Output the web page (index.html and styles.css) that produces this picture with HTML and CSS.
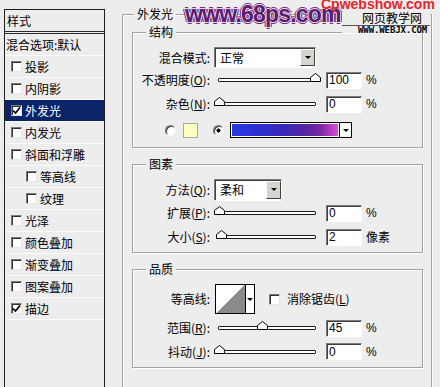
FILE: index.html
```html
<!DOCTYPE html>
<html lang="zh-CN">
<head>
<meta charset="utf-8">
<title>图层样式 - 外发光</title>
<link rel="stylesheet" href="styles.css">
</head>
<body>
<div class="dialog">

  <div class="styles">
    <div class="styles-head">样式</div>
    <div class="item plain">混合选项:默认</div>
    <div class="item"><span class="chk"></span>投影</div>
    <div class="item"><span class="chk"></span>内阴影</div>
    <div class="item selected"><span class="chk on"><svg width="9" height="9" viewBox="0 0 9 9"><polyline points="1,4.5 3.5,7 8,1.5" fill="none" stroke="#000" stroke-width="1.7"/></svg></span>外发光</div>
    <div class="item"><span class="chk"></span>内发光</div>
    <div class="item"><span class="chk"></span>斜面和浮雕</div>
    <div class="item sub"><span class="chk"></span>等高线</div>
    <div class="item sub"><span class="chk"></span>纹理</div>
    <div class="item"><span class="chk"></span>光泽</div>
    <div class="item"><span class="chk"></span>颜色叠加</div>
    <div class="item"><span class="chk"></span>渐变叠加</div>
    <div class="item"><span class="chk"></span>图案叠加</div>
    <div class="item"><span class="chk on"><svg width="9" height="9" viewBox="0 0 9 9"><polyline points="1,4.5 3.5,7 8,1.5" fill="none" stroke="#000" stroke-width="1.7"/></svg></span>描边</div>
  </div>

  <div class="main">
    <fieldset class="outer">
      <legend>外发光</legend>

      <fieldset class="group g-struct">
        <legend>结构</legend>
        <div class="row h21">
          <span class="lbl">混合模式:</span>
          <div class="select w-mode"><span class="val">正常</span><span class="drop"><i class="arrow"></i></span></div>
        </div>
        <div class="row h24">
          <span class="lbl">不透明度(<u>O</u>):</span>
          <div class="slider"><span class="thumb" style="left: 100%"><svg width="11" height="9" viewBox="0 0 11 9"><path d="M0.5 8.5V4.5L5.5 0.5L10.5 4.5V8.5Z" fill="#fff" stroke="#000"/></svg></span></div>
          <input class="num" value="100" readonly>
          <span class="unit">%</span>
        </div>
        <div class="row h24">
          <span class="lbl">杂色(<u>N</u>):</span>
          <div class="slider"><span class="thumb" style="left: 0%"><svg width="11" height="9" viewBox="0 0 11 9"><path d="M0.5 8.5V4.5L5.5 0.5L10.5 4.5V8.5Z" fill="#fff" stroke="#000"/></svg></span></div>
          <input class="num" value="0" readonly>
          <span class="unit">%</span>
        </div>
        <div class="row h28 colors">
          <span class="radio"></span>
          <span class="swatch"></span>
          <span class="radio on"></span>
          <div class="grad"><span class="grad-bar"></span><span class="grad-drop"><i class="arrow"></i></span></div>
        </div>
      </fieldset>

      <fieldset class="group g-elem">
        <legend>图素</legend>
        <div class="row h23">
          <span class="lbl">方法(<u>Q</u>):</span>
          <div class="select w-method"><span class="val">柔和</span><span class="drop"><i class="arrow"></i></span></div>
        </div>
        <div class="row h24">
          <span class="lbl">扩展(<u>P</u>):</span>
          <div class="slider"><span class="thumb" style="left: 0%"><svg width="11" height="9" viewBox="0 0 11 9"><path d="M0.5 8.5V4.5L5.5 0.5L10.5 4.5V8.5Z" fill="#fff" stroke="#000"/></svg></span></div>
          <input class="num" value="0" readonly>
          <span class="unit">%</span>
        </div>
        <div class="row h24">
          <span class="lbl">大小(<u>S</u>):</span>
          <div class="slider"><span class="thumb" style="left: 2%"><svg width="11" height="9" viewBox="0 0 11 9"><path d="M0.5 8.5V4.5L5.5 0.5L10.5 4.5V8.5Z" fill="#fff" stroke="#000"/></svg></span></div>
          <input class="num" value="2" readonly>
          <span class="unit cjk">像素</span>
        </div>
      </fieldset>

      <fieldset class="group g-quality">
        <legend>品质</legend>
        <div class="row h34">
          <span class="lbl">等高线:</span>
          <div class="contour"><span class="contour-pre"></span><span class="contour-drop"><i class="arrow"></i></span></div>
          <span class="chk aa"></span>
          <span class="chk-lbl">消除锯齿(<u>L</u>)</span>
        </div>
        <div class="row h24">
          <span class="lbl">范围(<u>R</u>):</span>
          <div class="slider"><span class="thumb" style="left: 45%"><svg width="11" height="9" viewBox="0 0 11 9"><path d="M0.5 8.5V4.5L5.5 0.5L10.5 4.5V8.5Z" fill="#fff" stroke="#000"/></svg></span></div>
          <input class="num" value="45" readonly>
          <span class="unit">%</span>
        </div>
        <div class="row h23">
          <span class="lbl">抖动(<u>J</u>):</span>
          <div class="slider"><span class="thumb" style="left: 0%"><svg width="11" height="9" viewBox="0 0 11 9"><path d="M0.5 8.5V4.5L5.5 0.5L10.5 4.5V8.5Z" fill="#fff" stroke="#000"/></svg></span></div>
          <input class="num" value="0" readonly>
          <span class="unit">%</span>
        </div>
      </fieldset>
    </fieldset>
  </div>

  <div class="wm-68">www.68ps.com</div>
  <div class="wm-jx">
    <div class="jx-cn">网页教学网</div>
    <div class="jx-en">WWW.WEBJX.COM</div>
  </div>
  <div class="wm-cp">Cpwebshow.com</div>
</div>
</body>
</html>
```

FILE: styles.css
```css
body {
    margin: 0;
    background: #ededed;
    color: #000;
    font: 12px/14px "Noto Sans CJK SC", "Liberation Sans", sans-serif;
    overflow: hidden;
}

.dialog {
    position: relative;
    display: flex;
    height: 387px;
    overflow: hidden;
}

/* left list of styles */
.styles {
    flex: none;
    width: 99px;
    height: 420px;
    margin: 9px 0 0 4px;
    border: 1px solid #1e1e1e;
    border-bottom: 0;
}

.styles-head {
    height: 21px;
    line-height: 21px;
    padding-left: 2px;
    border-bottom: 3px double #2a2a2a;
}

.item {
    display: flex;
    align-items: center;
    height: 21px;
    padding-left: 6px;
    border-bottom: 1px solid #fbfbfb;
}

.item.plain { padding-left: 1px; }
.item.sub { padding-left: 21px; }

.item.selected {
    background: #0a246a;
    color: #fff;
}

.chk {
    flex: none;
    display: flex;
    align-items: center;
    justify-content: center;
    width: 9px;
    height: 9px;
    margin-right: 3px;
    background: #fff;
    border: 1px solid;
    border-color: #7a7a7a #e6e6e6 #e6e6e6 #7a7a7a;
    box-shadow: inset 1px 1px 0 #333;
}

/* right side */
.main {
    flex: none;
    margin-left: 17px;
    padding-top: 7px;
}

fieldset {
    box-sizing: border-box;
    min-width: 0;
    margin: 0;
    padding: 0;
    border: 1px solid #a2a2a2;
    box-shadow: 1px 1px 0 #fff, inset 1px 1px 0 #fff;
}

legend {
    padding: 0 3px;
    line-height: 14px;
    background: #ededed;
}

.outer {
    width: 310px;
    height: 420px;
}

.outer > legend { margin-left: 11px; }

.group {
    width: 291px;
    margin-left: 9px;
}

.group > legend { margin-left: 13px; }

.g-struct { margin-top: 4px; padding: 8px 0 3px; }
.g-elem { margin-top: 9px; padding: 7px 0 3px; }
.g-quality { margin-top: 9px; padding: 6px 0 4px; }

.row {
    display: flex;
    align-items: center;
}

.h21 { height: 21px; }
.h23 { height: 23px; }
.h24 { height: 24px; }
.h28 { height: 28px; }
.h34 { height: 34px; }

.lbl {
    flex: none;
    width: 77px;
    text-align: right;
}

.select {
    display: flex;
    box-sizing: border-box;
    height: 21px;
    margin-left: 4px;
    background: #fff;
    border: 1px solid;
    border-color: #7a7a7a #fff #fff #7a7a7a;
    box-shadow: inset 1px 1px 0 #404040;
}

.w-mode { width: 102px; }
.w-method { width: 68px; height: 22px; }

.select .val {
    flex: 1;
    padding: 1px 0 0 5px;
    line-height: 17px;
}

.drop {
    display: flex;
    align-items: center;
    justify-content: center;
    width: 13px;
    margin: 1px 0;
    background: #d6d4ce;
    border: 1px solid;
    border-color: #fff #404040 #404040 #fff;
}

.arrow {
    width: 0;
    height: 0;
    border-left: 3px solid transparent;
    border-right: 3px solid transparent;
    border-top: 3px solid #000;
}

.slider {
    position: relative;
    flex: none;
    box-sizing: border-box;
    width: 98px;
    height: 4px;
    margin-left: 8px;
    background: #fff;
    border: 1px solid #1a1a1a;
    border-radius: 1px;
}

.thumb {
    position: absolute;
    top: -6px;
    width: 11px;
    height: 9px;
    margin-left: -5px;
}

.thumb svg { display: block; }

.num {
    box-sizing: border-box;
    width: 36px;
    height: 17px;
    margin: 0 0 0 10px;
    padding: 0 0 0 2px;
    background: #fff;
    border: 1px solid;
    border-color: #7a7a7a #fff #fff #7a7a7a;
    box-shadow: inset 1px 1px 0 #404040;
    font: 12px/15px "Liberation Sans", sans-serif;
    color: #000;
    outline: none;
}

.unit {
    margin-left: 4px;
    font-family: "Liberation Sans", "Noto Sans CJK SC", sans-serif;
}

.unit.cjk { font-family: "Noto Sans CJK SC", sans-serif; }

/* colour row */
.colors { padding-left: 32px; }

.radio {
    flex: none;
    box-sizing: border-box;
    width: 11px;
    height: 11px;
    border-radius: 50%;
    background: #fff;
    border: 1px solid;
    border-color: #6f6f6f #f4f4f4 #f4f4f4 #6f6f6f;
    box-shadow: inset 1px 1px 0 #3a3a3a;
}

.radio.on {
    margin-left: 15px;
    background: radial-gradient(circle, #000 0 1.8px, #fff 2.3px);
}

.swatch {
    flex: none;
    box-sizing: border-box;
    width: 15px;
    height: 15px;
    margin-left: 7px;
    background: #ffffc2;
    border: 1px solid #a8a8a0;
}

.grad {
    display: flex;
    box-sizing: border-box;
    width: 122px;
    height: 16px;
    margin-left: 6px;
    border: 1px solid #000;
}

.grad-bar {
    flex: 1;
    border: 1px solid #fff;
    background: linear-gradient(to right, #2438e4 0%, #2c30d0 25%, #3a28b8 50%, #5a259e 72%, #7a2aa2 84%, #c23fcf 95%, #d650d8 100%);
}

.grad-drop {
    display: flex;
    align-items: center;
    justify-content: center;
    width: 11px;
    background: #fff;
    border-left: 1px solid #000;
}

/* contour row */
.contour {
    display: flex;
    box-sizing: border-box;
    width: 40px;
    height: 30px;
    margin-left: 5px;
    border: 1px solid #000;
}

.contour-pre {
    width: 29px;
    background: linear-gradient(to top left, #8a8a8a 50%, #fff 50%);
    border-right: 1px solid #000;
}

.contour-drop {
    flex: 1;
    display: flex;
    align-items: center;
    justify-content: center;
    background: #fff;
}

.chk.aa {
    margin: 0 0 0 14px;
}

.chk-lbl { margin-left: 7px; }

/* watermarks laid over the dialog */
.wm-68 {
    position: absolute;
    left: 185px;
    top: 3px;
    font: bold 23px/23px "Liberation Sans", sans-serif;
    letter-spacing: -0.8px;
    color: #5a1d6e;
    text-shadow: 1px 0 0 #f4dcf4, -1px 0 0 #f4dcf4, 0 1px 0 #f4dcf4, 0 -1px 0 #f4dcf4,
                 2px 0 0 #6a2a7a, -2px 0 0 #6a2a7a, 0 2px 0 #6a2a7a, 0 -2px 0 #6a2a7a;
}

.wm-cp {
    position: absolute;
    left: 321px;
    top: -3px;
    font: bold 14px/14px "Liberation Sans", sans-serif;
    color: #e3262b;
}

.wm-jx {
    position: absolute;
    left: 342px;
    top: 12px;
    width: 88px;
    height: 21px;
    background: #ededed;
}

.jx-cn {
    padding-left: 20px;
    font-size: 12px;
    line-height: 12px;
}

.jx-en {
    margin-top: 1px;
    padding: 1px 0 0 16px;
    border-top: 1px solid #555;
    font: bold 9px/7px "DejaVu Sans Mono", monospace;
    letter-spacing: -0.1px;
}
```
